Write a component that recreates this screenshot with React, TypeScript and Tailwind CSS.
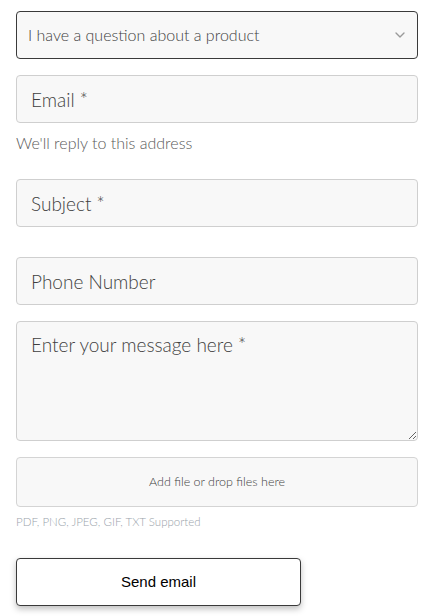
import { ChevronDown } from "lucide-react";

const font = { fontFamily: "Lato, 'Noto Sans', sans-serif" };

const inputClass =
  "block w-full h-12 rounded-[4px] border border-[#cfcfcf] bg-[#f8f8f8] px-[14px] text-[19px] font-light text-[#333] placeholder:text-[#3f3f3f] outline-none";

export default function App() {
  return (
    <div className="bg-white w-[434px] h-[616px] px-4 pt-[11px]" style={font}>
      {/* Topic select */}
      <div className="relative">
        <select
          defaultValue="product"
          className="block w-full h-12 appearance-none rounded-[4px] border border-[#3a3a3a] bg-[#f8f8f8] pl-[11px] pr-8 text-[16px] font-light text-[#3f3f3f] outline-none"
        >
          <option value="product">I have a question about a product</option>
        </select>
        <ChevronDown
          className="pointer-events-none absolute right-[10px] top-[16px] h-4 w-4 text-[#9a9a9a]"
          strokeWidth={2}
        />
      </div>

      {/* Email */}
      <div className="mt-4">
        <input type="email" placeholder="Email *" className={inputClass} />
        <p className="mt-[8px] text-[16px] font-light text-[#5a5a5a]">We'll reply to this address</p>
      </div>

      <input type="text" placeholder="Subject *" className={`${inputClass} mt-[24px]`} />

      <input type="tel" placeholder="Phone Number" className={`${inputClass} mt-[30px]`} />

      <textarea
        placeholder="Enter your message here *"
        className="mt-4 block w-full h-[120px] rounded-[4px] border border-[#cfcfcf] bg-[#f8f8f8] px-[14px] pt-[9px] text-[19px] font-light text-[#333] placeholder:text-[#3f3f3f] outline-none"
      />

      {/* File drop */}
      <div className="mt-4 flex h-[50px] items-center justify-center rounded-[4px] border border-[#d4d4d4] bg-[#f8f8f8] text-[12.5px] font-light text-[#3f3f3f]">
        Add file or drop files here
      </div>
      <p className="mt-[6px] text-[11.5px] font-light text-[#9aa3ab]">PDF, PNG, JPEG, GIF, TXT Supported</p>

      <button
        type="button"
        className="mt-[28px] h-12 w-[285px] rounded-[4px] border border-[#3a3a3a] bg-white text-[15px] text-black shadow-[0_3px_6px_rgba(0,0,0,0.25)]"
        style={{ fontFamily: "'Liberation Sans', Arial, sans-serif" }}
      >
        Send email
      </button>
    </div>
  );
}
